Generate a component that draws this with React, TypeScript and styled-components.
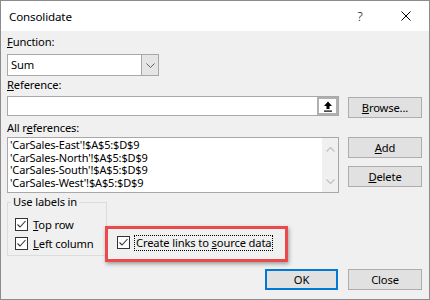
import styled, { createGlobalStyle } from "styled-components"

const GlobalStyle = createGlobalStyle`
  html, body {
    margin: 0;
    padding: 0;
    background: #fff;
  }
  body {
    font-family: "Noto Sans", "DejaVu Sans", sans-serif;
    font-size: 11.2px;
    letter-spacing: -0.15px;
    color: #000;
  }
  * {
    box-sizing: border-box;
  }
`

const REFERENCES = [
  "'CarSales-East'!$A$5:$D$9",
  "'CarSales-North'!$A$5:$D$9",
  "'CarSales-South'!$A$5:$D$9",
  "'CarSales-West'!$A$5:$D$9"
]

const Check = () => (
  <CheckBox>
    <svg width="11" height="11" viewBox="0 0 11 11">
      <path d="M1.5 5.5 L4 8 L9.5 2" fill="none" stroke="#333" strokeWidth="1.1" />
    </svg>
  </CheckBox>
)

export default function App() {
  return (
    <>
      <GlobalStyle />
      <Dialog>
        <TitleBar>
          <Title>Consolidate</Title>
          <TitleButton>?</TitleButton>
          <TitleButton>
            <svg width="10" height="10" viewBox="0 0 10 10">
              <path d="M0.5 0.5 L9.5 9.5 M9.5 0.5 L0.5 9.5" stroke="#000" strokeWidth="1" />
            </svg>
          </TitleButton>
        </TitleBar>
        <Body>
          <FieldLabel $top={3}>
            <u>F</u>unction:
          </FieldLabel>
          <Select>
            <SelectValue>Sum</SelectValue>
            <SelectArrow>
              <svg width="9" height="5" viewBox="0 0 9 5">
                <path d="M0.5 0.5 L4.5 4.5 L8.5 0.5" fill="none" stroke="#606060" strokeWidth="1" />
              </svg>
            </SelectArrow>
          </Select>
          <FieldLabel $top={1}>
            <u>R</u>eference:
          </FieldLabel>
          <Row $top={3} $gap={9}>
            <TextInput>
              <CollapseButton>
                <svg width="10" height="11" viewBox="0 0 10 11">
                  <path d="M5 0.5 L9 5 L6.5 5 L6.5 8 L3.5 8 L3.5 5 L1 5 Z" fill="#000" />
                  <rect x="1" y="9.5" width="8" height="1.2" fill="#000" />
                </svg>
              </CollapseButton>
            </TextInput>
            <Button $top={1}>
              <u>B</u>rowse...
            </Button>
          </Row>
          <FieldLabel $top={2}>
            All r<u>e</u>ferences:
          </FieldLabel>
          <Row $top={1} $gap={9}>
            <ListBox>
              <ListItems>
                {REFERENCES.map((r) => (
                  <ListItem key={r}>{r}</ListItem>
                ))}
              </ListItems>
              <ScrollBar>
                <svg width="9" height="5" viewBox="0 0 9 5">
                  <path d="M0.5 4.5 L4.5 0.5 L8.5 4.5" fill="none" stroke="#c2c2c2" strokeWidth="1.2" />
                </svg>
                <svg width="9" height="5" viewBox="0 0 9 5">
                  <path d="M0.5 0.5 L4.5 4.5 L8.5 0.5" fill="none" stroke="#c2c2c2" strokeWidth="1.2" />
                </svg>
              </ScrollBar>
            </ListBox>
            <SideButtons>
              <Button>
                <u>A</u>dd
              </Button>
              <Button>
                <u>D</u>elete
              </Button>
            </SideButtons>
          </Row>
          <Row $top={1} $gap={0}>
            <GroupBox>
              <Legend>Use labels in</Legend>
              <CheckItem $top={8}>
                <Check />
                <span>
                  <u>T</u>op row
                </span>
              </CheckItem>
              <CheckItem $top={6}>
                <Check />
                <span>
                  <u>L</u>eft column
                </span>
              </CheckItem>
            </GroupBox>
            <Highlight>
              <CheckItem $top={0}>
                <Check />
                <Focused>
                  Create links to <u>s</u>ource data
                </Focused>
              </CheckItem>
            </Highlight>
          </Row>
          <Footer>
            <Button $primary $width={73}>
              OK
            </Button>
            <Button>Close</Button>
          </Footer>
        </Body>
      </Dialog>
    </>
  )
}

const Dialog = styled.div`
  width: 430px;
  height: 300px;
  border: 1px solid #8c8c8c;
  background: #f0f0f0;
  display: flex;
  flex-direction: column;
`

const TitleBar = styled.div`
  height: 30px;
  background: #fff;
  display: flex;
  align-items: center;
  padding-left: 8px;
`

const Title = styled.div`
  flex: 1;
  font-size: 11.6px;
`

const TitleButton = styled.div`
  width: 46px;
  height: 30px;
  display: flex;
  align-items: center;
  justify-content: center;
  font-size: 13px;
  font-weight: 300;
`

const Body = styled.div`
  display: flex;
  flex-direction: column;
  padding: 0 7px 0 6px;
`

const FieldLabel = styled.div<{ $top: number }>`
  height: 16px;
  line-height: 16px;
  margin-top: ${(p) => p.$top}px;
`

const Select = styled.div`
  margin-top: 4px;
  width: 152px;
  height: 22px;
  display: flex;
  border: 1px solid #a8a8a8;
  background: #fff;
`

const SelectValue = styled.div`
  flex: 1;
  padding-left: 3px;
  line-height: 20px;
`

const SelectArrow = styled.div`
  width: 17px;
  display: flex;
  align-items: center;
  justify-content: center;
  background: #e5e5e5;
  border-left: 1px solid #a8a8a8;
`

const Row = styled.div<{ $top: number; $gap: number }>`
  display: flex;
  align-items: flex-start;
  margin-top: ${(p) => p.$top}px;
  gap: ${(p) => p.$gap}px;
`

const TextInput = styled.div`
  width: 332px;
  height: 20px;
  border: 1px solid #a8a8a8;
  background: #fff;
  display: flex;
  justify-content: flex-end;
`

const CollapseButton = styled.div`
  width: 21px;
  height: 18px;
  border: 2px solid #b0b0b0;
  background: #fff;
  display: flex;
  align-items: center;
  justify-content: center;
`

const Button = styled.div<{ $top?: number; $primary?: boolean; $width?: number }>`
  width: ${(p) => p.$width ?? 74}px;
  height: 21px;
  margin-top: ${(p) => p.$top ?? 0}px;
  border: ${(p) => (p.$primary ? "2px solid #0078d7" : "1px solid #adadad")};
  background: #e1e1e1;
  display: flex;
  align-items: center;
  justify-content: center;
`

const ListBox = styled.div`
  width: 332px;
  height: 56px;
  border: 1px solid #a8a8a8;
  background: #fff;
  display: flex;
`

const ListItems = styled.div`
  flex: 1;
  padding: 1px 0 0 2px;
  font-size: 11px;
`

const ListItem = styled.div`
  height: 12.5px;
  line-height: 12.5px;
  white-space: nowrap;
`

const ScrollBar = styled.div`
  width: 16px;
  background: #f0f0f0;
  display: flex;
  flex-direction: column;
  align-items: center;
  justify-content: space-between;
  padding: 9px 0 8px;
`

const SideButtons = styled.div`
  display: flex;
  flex-direction: column;
  gap: 8px;
`

const GroupBox = styled.fieldset`
  width: 100px;
  height: 62px;
  margin: 0;
  padding: 0 0 5px 7px;
  border: 1px solid #dcdcdc;
  min-width: 0;
`

const Legend = styled.legend`
  padding: 0 2px;
  margin-left: -4px;
  height: 16px;
  line-height: 16px;
`

const CheckItem = styled.div<{ $top: number }>`
  display: flex;
  align-items: center;
  gap: 5px;
  height: 13px;
  margin-top: ${(p) => p.$top}px;
  white-space: nowrap;
`

const CheckBox = styled.div`
  width: 13px;
  height: 13px;
  flex: none;
  border: 1px solid #333;
  background: #fff;
  display: flex;
  align-items: center;
  justify-content: center;
`

const Highlight = styled.div`
  margin: 32px 0 0 -2px;
  width: 183px;
  height: 36px;
  border: 3px solid #ea4a4c;
  box-shadow: 1px 2px 4px rgba(0, 0, 0, 0.35);
  padding: 7px 0 0 9px;
`

const Focused = styled.span`
  outline: 1px dotted #000;
  outline-offset: 0;
  padding: 0 1px;
  line-height: 14px;
`

const Footer = styled.div`
  display: flex;
  justify-content: flex-end;
  gap: 10px;
  margin-top: 7px;
`
